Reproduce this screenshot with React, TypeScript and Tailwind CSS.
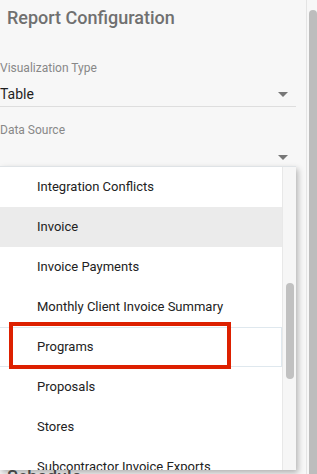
import React from 'react';

const items = [
  'Integration Conflicts',
  'Invoice',
  'Invoice Payments',
  'Monthly Client Invoice Summary',
  'Programs',
  'Proposals',
  'Stores',
  'Subcontractor Invoice Exports',
];

const Caret = () => (
  <svg width="10" height="5" viewBox="0 0 10 5" className="mr-[8px]">
    <path d="M0 0 L10 0 L5 5 Z" fill="#777" />
  </svg>
);

export default function App() {
  return (
    <div
      className="relative w-[317px] h-[474px] overflow-hidden bg-[#f7f7f7] flex"
      style={{ fontFamily: 'Roboto, "Liberation Sans", sans-serif' }}
    >
      {/* Panel content */}
      <div className="w-[306px] flex flex-col">
        <h2 className="pl-[7px] pt-[6px] text-[18px] leading-[24px] font-medium text-[#707070]">Report Configuration</h2>

        <div className="pr-[10px] mt-[30px]">
          <div className="text-[12px] leading-[16px] text-[#888]">Visualization Type</div>
          <div className="flex items-center justify-between h-[25px] border-b border-[#dedede] mt-[6px]">
            <span className="text-[14px] text-[#1f1f1f]">Table</span>
            <Caret />
          </div>
        </div>

        <div className="pr-[10px] mt-[15px]">
          <div className="text-[12px] leading-[16px] text-[#888]">Data Source</div>
          <div className="flex items-center justify-end h-[27px] border-b border-[#dedede] mt-[6px]">
            <Caret />
          </div>
        </div>

        <h2 className="pl-[7px] mt-[294px] text-[18px] leading-[24px] font-medium text-[#555]">Schedule</h2>
      </div>

      {/* Divider + outer scrollbar */}
      <div className="w-[3px] border-l border-[#e4e4e4]" />
      <div className="w-[8px] pt-[10px]">
        <div className="h-full bg-[#bdbdbd] rounded-t-[4px]" />
      </div>

      {/* Dropdown menu */}
      <div className="absolute left-0 top-[166px] w-[296px] h-[304px] bg-white border-t border-[#dfe3e6] shadow-[2px_3px_6px_rgba(0,0,0,0.28)] flex overflow-hidden">
        <ul className="flex-1 flex flex-col">
          {items.map((label) => {
            const hover = label === 'Invoice';
            const focus = label === 'Programs';
            return (
              <li
                key={label}
                className={`relative h-[40px] shrink-0 flex items-center pl-[37px] text-[13px] text-[#222] ${
                  hover ? 'bg-[#ebebeb]' : ''
                } ${focus ? 'border-y border-r border-[#dfe8ee]' : ''}`}
              >
                {label}
                {focus && (
                  <span className="absolute left-[9px] top-[-6px] w-[222px] h-[47px] border-[4px] border-[#dd2000]" />
                )}
              </li>
            );
          })}
        </ul>
        <div className="w-[14px] bg-[#f6f6f6] border-l border-[#e8e8e8] relative">
          <div className="absolute left-[3px] top-[116px] w-[8px] h-[96px] rounded-full bg-[#c1c1c1]" />
        </div>
      </div>
    </div>
  );
}
